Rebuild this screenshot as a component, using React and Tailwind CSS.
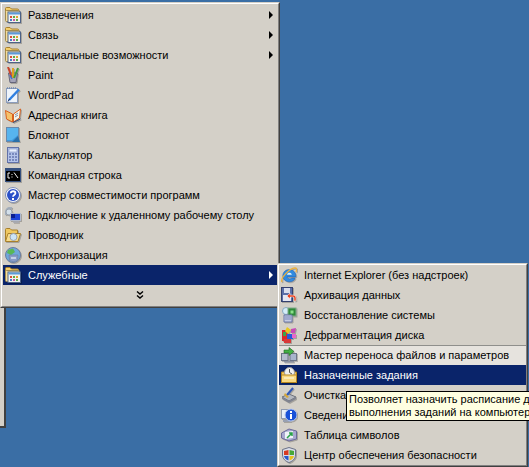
import React from 'react';

// Иконки 16x16
const Svg = ({ children }) => (
  <svg width="16" height="16" viewBox="0 0 16 16" className="shrink-0 drop-shadow-[1px_1px_0_rgba(0,0,0,0.22)]">
    {children}
  </svg>
);

const ProgramsFolder = () => (
  <Svg>
    <path d="M0.5 5V1.5Q0.5 0.5 1.5 0.5H5L6.5 2H12.5Q13.5 2 13.5 3V5Z" fill="#f4cf6e" stroke="#a8802c" />
    <rect x="0.5" y="3.5" width="14" height="11" rx="1" fill="#f7df9a" stroke="#a08a50" />
    <rect x="3" y="5" width="12.5" height="10.5" fill="#f2f2ee" stroke="#4d6288" />
    <rect x="3.5" y="5.5" width="11.5" height="2" fill="#5c9ad8" />
    <rect x="5" y="9" width="2" height="2" fill="#d8503a" />
    <rect x="8" y="9" width="2" height="2" fill="#5aa84a" />
    <rect x="11" y="9" width="2" height="2" fill="#e0a830" />
    <rect x="5" y="12" width="2" height="2" fill="#4a7ac8" />
    <rect x="8" y="12" width="2" height="2" fill="#c85a9a" />
    <rect x="11" y="12" width="2" height="2" fill="#5aa84a" />
  </Svg>
);

const Paint = () => (
  <Svg>
    <path d="M3.5 6H12.5L11 15.5H5Z" fill="#a4a4b8" stroke="#66667a" />
    <path d="M3 0L7 11" stroke="#c8442a" strokeWidth="2" />
    <path d="M8 1L8 11" stroke="#e0a020" strokeWidth="2" />
    <path d="M13 1L9 11" stroke="#3f9a3f" strokeWidth="2" />
    <path d="M5 8L7 12" stroke="#3f6fd0" strokeWidth="1.5" />
  </Svg>
);

const WordPad = () => (
  <Svg>
    <rect x="1.5" y="1.5" width="11" height="14" fill="#eef4fb" stroke="#8a9cbc" />
    <path d="M2 1H12" stroke="#6f87ad" strokeWidth="1.5" strokeDasharray="1 1" />
    <path d="M4 13L14 2.5" stroke="#2f7fe0" strokeWidth="2.5" />
    <path d="M3 14.5L4.5 12" stroke="#1c2f5a" />
  </Svg>
);

const AddressBook = () => (
  <Svg>
    <path d="M0.5 3.5L7.5 7V15L1.5 12Z" fill="#f6c26a" stroke="#d8601f" />
    <path d="M15.5 2L8.5 7V15L14.5 11Z" fill="#f4f4e8" stroke="#d8601f" />
    <path d="M10 8L13 6M10 10L13 8" stroke="#7f8fb0" />
    <path d="M8 15.5L15.5 12" stroke="#35507f" />
  </Svg>
);

const Notepad = () => (
  <Svg>
    <rect x="1.5" y="0.5" width="12" height="14" fill="#3f9ade" stroke="#6a88aa" />
    <path d="M2 1H13V8L7 13H2Z" fill="#57b4ee" />
    <path d="M13 9L7 15L15 15Z" fill="#2a6fa8" />
  </Svg>
);

const Calc = () => (
  <Svg>
    <rect x="2.5" y="0.5" width="11" height="15" fill="#b4c4ea" stroke="#6272a8" />
    <rect x="4" y="2" width="8" height="3" fill="#e8f0ff" stroke="#6d7eb0" strokeWidth="0.5" />
    <path d="M4 7H6M7 7H9M10 7H12M4 10H6M7 10H9M10 10H12M4 13H6M7 13H9M10 13H12" stroke="#6576ae" strokeWidth="1.5" />
  </Svg>
);

const Cmd = () => (
  <Svg>
    <rect x="0" y="1" width="16" height="14" fill="#35507f" />
    <rect x="1" y="4" width="14" height="10" fill="#000" />
    <path d="M5 6H3V11H5M7 7V8M7 9.5V10.5M9 5.5L13 11" fill="none" stroke="#f0f0f0" />
  </Svg>
);

const Help = () => (
  <Svg>
    <circle cx="8" cy="8" r="7.5" fill="#f4f6fb" stroke="#7f8fb5" />
    <circle cx="8" cy="8" r="6" fill="#2a50c8" />
    <path d="M5.8 6.2C6 3.6 10.4 3.6 10.4 6.2C10.4 8 8 8 8 9.8" fill="none" stroke="#fff" strokeWidth="1.8" />
    <rect x="7" y="11" width="2" height="2" fill="#fff" />
  </Svg>
);

const Remote = () => (
  <Svg>
    <path d="M1 8C0 3 3 0 7 1" fill="none" stroke="#a2adbb" strokeWidth="2" />
    <circle cx="4" cy="5" r="3" fill="#d4e0ea" stroke="#98a2ae" />
    <rect x="5.5" y="6.5" width="10" height="7" fill="#1f44d8" stroke="#b0bace" />
    <path d="M6 7H10V11H6Z" fill="#0c1f90" />
    <path d="M8 15H14" stroke="#a4a9b4" strokeWidth="1.5" />
  </Svg>
);

const Explorer = () => (
  <Svg>
    <path d="M0.5 14V2.5Q0.5 1.5 1.5 1.5H5L6.5 3H12.5V7" fill="#f0c860" stroke="#a8802c" />
    <path d="M0.5 14.5L3 6.5H15.5L13 14.5Z" fill="#f7dc8a" stroke="#a8802c" />
    <circle cx="8.5" cy="10" r="3.5" fill="#cce4f6" stroke="#98a2b6" />
  </Svg>
);

const Sync = () => (
  <Svg>
    <circle cx="8" cy="8" r="7.5" fill="#6fa8dc" stroke="#6a7ca0" />
    <path d="M3 3L8 1.5L10 5L6 8L2 6Z" fill="#58b858" />
    <path d="M4 8H13L12.5 13.5Q8 16 4.5 13.5Z" fill="#8a9cc8" stroke="#6a7ca0" strokeWidth="0.6" />
    <path d="M6 10H11V12H6Z" fill="#c4d0e8" />
  </Svg>
);

const Ie = () => (
  <Svg>
    <path d="M8.2 2.5C4 2.5 1.8 5.8 1.8 9C1.8 13 5.6 14.8 8.6 14.8C11.4 14.8 13.2 13.6 14.2 11H10.6C10 12.2 6.8 12.4 6 9.9H14.8C15.2 5.8 12.4 2.5 8.2 2.5Z" fill="#2f8ae0" stroke="#1a5ab0" strokeWidth="0.5" />
    <path d="M6 7.8C6.5 5.2 10.2 5.2 10.8 7.8Z" fill="#e4f2fc" />
    <path d="M1 15C-1 11.5 8 1.5 14 0.8C16.2 0.8 16 3.5 14.8 5" fill="none" stroke="#eeb13a" strokeWidth="1.3" />
  </Svg>
);

const Backup = () => (
  <Svg>
    <rect x="0.5" y="0.5" width="11" height="14" fill="#5a6ea8" stroke="#34406e" />
    <rect x="3" y="1" width="6" height="5" fill="#d8dcec" />
    <rect x="2" y="8" width="8" height="6" fill="#e4e6f2" />
    <path d="M6 9L9 6V8H12Q15 8 15 11V14H13V11Q13 10 12 10H9V12Z" fill="#e8401c" stroke="#fff" strokeWidth="0.5" />
  </Svg>
);

const Restore = () => (
  <Svg>
    <circle cx="5" cy="4" r="3.5" fill="#d4ecf8" stroke="#88a8c0" />
    <rect x="7" y="1" width="8" height="8" fill="#2e8a3a" stroke="#7fa888" />
    <rect x="9.5" y="3.5" width="3" height="3" fill="#8ae08a" />
    <path d="M3 8H11V15H3Z" fill="#c4cce4" stroke="#6d78a8" />
    <path d="M4 10H10M4 12H10" stroke="#7a86b8" />
  </Svg>
);

const Defrag = () => (
  <Svg>
    <path d="M1 3H7V14H1Z" fill="#d82828" />
    <path d="M6 0L10 3L7 7L4 4Z" fill="#e8c820" />
    <path d="M10 2L15 1L14 6L10 6Z" fill="#c848b8" />
    <path d="M6 7H12V12H6Z" fill="#2858d8" />
    <path d="M11 7H15V11H11Z" fill="#e868c8" />
    <path d="M3 12H10V16H3Z" fill="#d83838" />
    <path d="M2 5H5V9H2Z" fill="#38a848" />
  </Svg>
);

const Transfer = () => (
  <Svg>
    <rect x="0.5" y="6.5" width="6.5" height="7" fill="#b4bccc" stroke="#6d7587" />
    <rect x="9" y="6.5" width="6.5" height="7" fill="#a8b4cc" stroke="#6d7587" />
    <path d="M3 3H8V0.5L13 4.5L8 8.5V6H3Z" fill="#44b044" stroke="#1f6a24" strokeWidth="0.6" />
    <path d="M3 14H13V15.5H3Z" fill="#8a90a0" />
  </Svg>
);

const Tasks = () => (
  <Svg>
    <path d="M0.5 5H15.5V15.5H0.5Z" fill="#f4c860" stroke="#b88820" />
    <circle cx="8.5" cy="5.5" r="5" fill="#f0f0f0" stroke="#9a9a9a" />
    <path d="M8.5 2V5.5L11 7" fill="none" stroke="#555" />
    <path d="M0.5 8H15.5V15.5H0.5Z" fill="#f8d880" stroke="#b88820" />
    <path d="M3 11H13" stroke="#fbf0c8" strokeWidth="1.5" />
  </Svg>
);

const Cleanup = () => (
  <Svg>
    <path d="M1 10L8 7L15 10L8 14Z" fill="#b4b8c0" stroke="#6e727c" />
    <path d="M1 10V12L8 16L15 12V10L8 14Z" fill="#808490" />
    <path d="M6 8L12 1" stroke="#2f58b8" strokeWidth="2" />
    <path d="M4 6L8 10L6 11L3 8Z" fill="#d8a838" />
  </Svg>
);

const Info = () => (
  <Svg>
    <rect x="0.5" y="2.5" width="10" height="9" fill="#e8eef8" stroke="#8f9ab0" />
    <path d="M2 14H10" stroke="#98a0b0" strokeWidth="2" />
    <circle cx="10" cy="8" r="6" fill="#1850d8" stroke="#b8c8ec" />
    <rect x="9" y="4" width="2" height="2" fill="#fff" />
    <rect x="9" y="7" width="2" height="5" fill="#fff" />
  </Svg>
);

const Charmap = () => (
  <Svg>
    <path d="M0.5 6L8 2L15.5 4V12L8 14L0.5 11Z" fill="#a8a8d0" stroke="#6a6a9a" />
    <path d="M4 5L12 4V11L4 12Z" fill="#eef2f8" />
    <path d="M6 11L11 6M8 6H11V9" fill="none" stroke="#28a048" strokeWidth="1.5" />
  </Svg>
);

const Shield = () => (
  <Svg>
    <path d="M8 0.5L14.5 2.5V8C14.5 12 11 14.5 8 15.5C5 14.5 1.5 12 1.5 8V2.5Z" fill="#d8dce8" stroke="#6a7288" />
    <path d="M3 4L7.5 3V8H3Z" fill="#d83a20" />
    <path d="M8.5 3L13 4V8H8.5Z" fill="#48a838" />
    <path d="M3 9H7.5V13.5C5 12.5 3.5 11 3 9Z" fill="#2a58c8" />
    <path d="M8.5 9H13C12.5 11 11 12.5 8.5 13.5Z" fill="#e8c020" />
  </Svg>
);

const mainItems = [
  { icon: ProgramsFolder, label: 'Развлечения', arrow: true },
  { icon: ProgramsFolder, label: 'Связь', arrow: true },
  { icon: ProgramsFolder, label: 'Специальные возможности', arrow: true },
  { icon: Paint, label: 'Paint' },
  { icon: WordPad, label: 'WordPad' },
  { icon: AddressBook, label: 'Адресная книга' },
  { icon: Notepad, label: 'Блокнот' },
  { icon: Calc, label: 'Калькулятор' },
  { icon: Cmd, label: 'Командная строка' },
  { icon: Help, label: 'Мастер совместимости программ' },
  { icon: Remote, label: 'Подключение к удаленному рабочему столу' },
  { icon: Explorer, label: 'Проводник' },
  { icon: Sync, label: 'Синхронизация' },
  { icon: ProgramsFolder, label: 'Служебные', arrow: true, active: true },
];

// "Очистка" и "Сведени" дальше закрыты подсказкой
const subItems = [
  { icon: Ie, label: 'Internet Explorer (без надстроек)' },
  { icon: Backup, label: 'Архивация данных' },
  { icon: Restore, label: 'Восстановление системы' },
  { icon: Defrag, label: 'Дефрагментация диска' },
  { icon: Transfer, label: 'Мастер переноса файлов и параметров', recent: true },
  { icon: Tasks, label: 'Назначенные задания', active: true },
  { icon: Cleanup, label: 'Очистка' },
  { icon: Info, label: 'Сведени' },
  { icon: Charmap, label: 'Таблица символов' },
  { icon: Shield, label: 'Центр обеспечения безопасности' },
];

function MenuItem({ item }) {
  const Icon = item.icon;
  return (
    <div
      className={`flex h-5 items-center pl-[2px] pr-1 ${
        item.active
          ? 'bg-[#0a246a] text-white'
          : item.recent
            ? 'bg-[#e6e3de] text-black shadow-[inset_0_1px_0_#8f8f8c]'
            : 'text-black'
      }`}
    >
      <Icon />
      <span className="ml-[7px] flex-1 whitespace-nowrap">{item.label}</span>
      {item.arrow && (
        <span
          className={`h-0 w-0 border-y-[4px] border-l-[4px] border-y-transparent ${
            item.active ? 'border-l-white' : 'border-l-black'
          }`}
        />
      )}
    </div>
  );
}

export default function App() {
  return (
    <div className="relative h-[467px] w-[529px] overflow-hidden bg-[#3a6ea5] font-['Liberation_Sans',sans-serif] text-[11px]">
      {/* окно за меню */}
      <div className="absolute left-0 top-[300px] h-[128px] w-[6px] border-b-2 border-r-2 border-[#404040] bg-[#d4d0c8]" />

      <div className="absolute left-0 top-[2px] w-[280px] border border-[#d4d0c8] border-b-[#404040] border-r-[#404040]">
        <div className="border border-white border-b-[#808080] border-r-[#808080] bg-[#d4d0c8] p-[1px]">
          {mainItems.map((item) => (
            <MenuItem key={item.label} item={item} />
          ))}
          <div className="flex h-5 items-center justify-center">
            <svg width="8" height="8" viewBox="0 0 8 8">
              <path d="M1 0.5L4 3L7 0.5M1 4.5L4 7L7 4.5" fill="none" stroke="#000" strokeWidth="1.4" />
            </svg>
          </div>
        </div>
      </div>

      <div className="absolute left-[277px] top-[263px] w-[251px] border border-[#d4d0c8] border-b-[#404040] border-r-[#404040]">
        <div className="border border-white border-b-[#808080] border-r-[#808080] bg-[#d4d0c8]">
          {subItems.map((item) => (
            <MenuItem key={item.label} item={item} />
          ))}
        </div>
      </div>

      <div className="absolute left-[346px] top-[391px] w-[200px] border border-black bg-[#ffffe1] px-[2px] py-[1px] leading-[13px] text-black">
        <div className="whitespace-nowrap">Позволяет назначить расписание д</div>
        <div className="whitespace-nowrap">выполнения заданий на компьютер</div>
      </div>
    </div>
  );
}
